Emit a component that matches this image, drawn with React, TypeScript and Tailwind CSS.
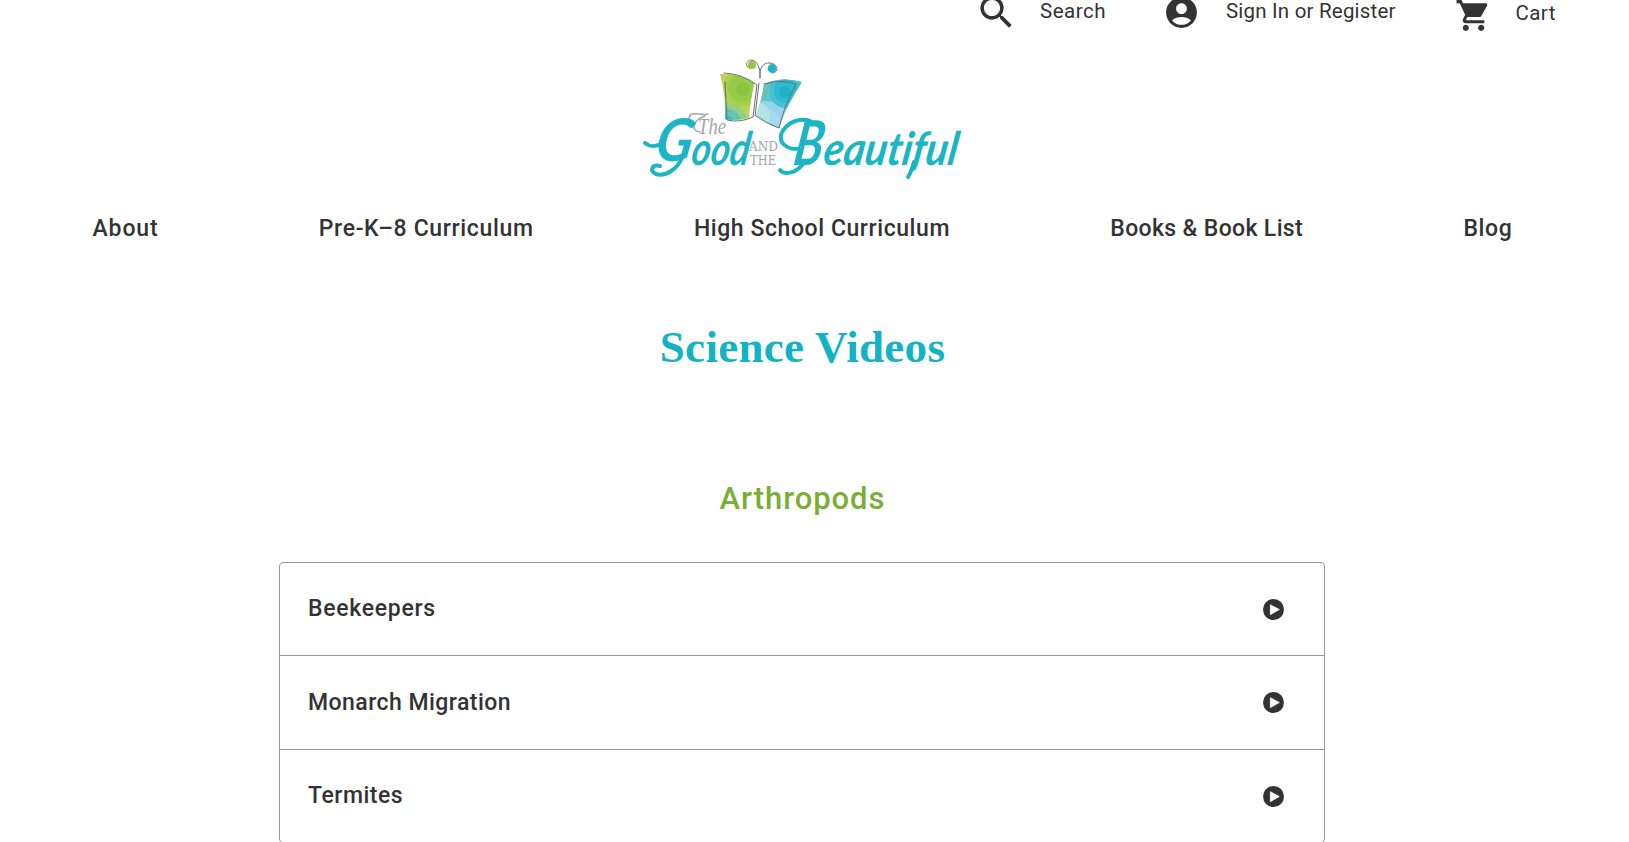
import React from "react";
import { MdSearch, MdAccountCircle, MdShoppingCart } from "react-icons/md";

const videos = [
  { name: "Beekeepers", tracking: "tracking-[0.7px]" },
  { name: "Monarch Migration", tracking: "tracking-[0.45px]" },
  { name: "Termites", tracking: "tracking-[0.5px]" },
];

function Logo() {
  return (
    <svg width="345" height="140" viewBox="0 0 345 140" className="block overflow-visible">
      <defs>
        <clipPath id="leftWing">
          <path d="M90 24 Q110 23 124 33 Q120 52 119 68 Q107 71 95 69 Q96 45 90 24Z" />
        </clipPath>
        <clipPath id="rightWing">
          <path d="M134 34 Q152 26 172 32 Q158 52 149 78 Q137 75 126 65 Q132 50 134 34Z" />
        </clipPath>
      </defs>

      {/* Left wing */}
      <g clipPath="url(#leftWing)">
        <rect x="85" y="18" width="45" height="55" fill="#b9d65a" />
        <circle cx="112" cy="38" r="19" fill="#a8d04e" />
        <circle cx="112" cy="38" r="14" fill="#97cb47" />
        <circle cx="113" cy="39" r="7" fill="#89c540" />
        <circle cx="94" cy="77" r="25" fill="#93cf8a" />
        <circle cx="94" cy="77" r="19" fill="#67c5ac" />
        <circle cx="94" cy="77" r="12" fill="#38bac1" />
      </g>
      {/* Right wing */}
      <g clipPath="url(#rightWing)">
        <rect x="120" y="20" width="60" height="65" fill="#63c8d9" />
        <circle cx="130" cy="40" r="18" fill="#62c5bd" />
        <circle cx="135" cy="80" r="29" fill="#94d3ea" />
        <circle cx="133" cy="79" r="21" fill="#a5daf0" />
        <circle cx="126" cy="66" r="14" fill="#b3e4e5" />
        <circle cx="156" cy="41" r="17" fill="#46c1d3" />
        <circle cx="156" cy="41" r="12" fill="#30bacd" />
        <circle cx="155" cy="42" r="6" fill="#1cb4c9" />
      </g>
      {/* Book outline and antennae */}
      <g fill="none" stroke="#6d7072" strokeWidth="1" strokeLinecap="round">
        <path d="M94 23 Q113 24 127 35 L123 67 Q110 73 97 70 L95 32" />
        <path d="M129 33 L125 66 M134 34 Q152 29 166 34 Q154 56 149 78 Q136 73 126 66" />
        <path d="M130 28 C131 18 127 10 121 10 C114 11 116 20 122 18" />
        <path d="M130 28 C129 18 133 12 140 13 C149 14 149 23 142 23" />
      </g>
      <circle cx="122" cy="15" r="4" fill="#93c83f" />
      <circle cx="142" cy="18.5" r="4.4" fill="#21b6c5" />

      {/* Flourishes */}
      <g fill="none" stroke="#1cb5c4" strokeWidth="4" strokeLinecap="round">
        <path d="M15 93 C20 97 27 97 33 93" />
        <path d="M52 108 C47 119 36 127 26 124 C19 121 22 114 30 116" />
        <path d="M172 98 C156 102 144 90 155 78 C161 71 171 68 180 71" />
        <path d="M173 114 C165 124 154 125 150 120" />
        <path d="M284 112 C282 118 281 123 278 127" />
      </g>
      <path d="M59 68 C60 60 70 66 78 64 M75 66 C63 70 60 81 70 82" fill="none" stroke="#a4a5a8" strokeWidth="1.5" strokeLinecap="round" />

      <text x="68" y="84" textLength="28" lengthAdjust="spacingAndGlyphs" fontSize="23" fill="#a4a5a8" className="font-['Liberation_Serif',serif] italic">
        The
      </text>
      <g fill="#1cb5c4" transform="translate(0 115) skewX(-9)" className="font-['Lato',sans-serif] font-bold italic [font-variant-ligatures:none]">
        <text x="23" y="-4" textLength="37" lengthAdjust="spacingAndGlyphs" fontSize="59">G</text>
        <text x="60" y="0" textLength="58" lengthAdjust="spacingAndGlyphs" fontSize="46">ood</text>
        <text x="162" y="0" textLength="29" lengthAdjust="spacingAndGlyphs" fontSize="62">B</text>
        <text x="192" y="0" textLength="134" lengthAdjust="spacingAndGlyphs" fontSize="46">eautiful</text>
      </g>
      <g fill="#a4a5a8" className="font-['DejaVu_Serif',serif] font-extralight">
        <text x="119" y="101" textLength="29" lengthAdjust="spacingAndGlyphs" fontSize="13">AND</text>
        <text x="120" y="115" textLength="26" lengthAdjust="spacingAndGlyphs" fontSize="13">THE</text>
      </g>
    </svg>
  );
}

function PlayIcon() {
  return (
    <svg width="21" height="21" viewBox="0 0 63 63">
      <circle cx="31.5" cy="31.5" r="31.5" fill="#333" />
      <path d="M22 17 L49 31.5 L22 47Z" fill="#fff" stroke="#fff" strokeWidth="2" strokeLinejoin="round" />
    </svg>
  );
}

function App() {
  return (
    <div className="h-[842px] w-full overflow-hidden bg-white font-['Roboto',sans-serif] text-[#333]">
      <div className="w-[1605px]">
        {/* Top links */}
        <div className="flex h-[50px] items-start pl-[975px] text-[20.5px] leading-6 whitespace-nowrap">
          <MdSearch className="-mt-[9px] size-[43px] shrink-0" />
          <a className="ml-[22px] -mt-px w-[67px] shrink-0 tracking-[0.5px]">Search</a>
          <MdAccountCircle className="ml-14 -mt-1.5 size-[37px] shrink-0" />
          <a className="ml-[26px] -mt-px w-[171px] shrink-0 tracking-[0.2px]">Sign In or Register</a>
          <MdShoppingCart className="ml-[57.5px] -mt-[3px] size-[37px] shrink-0" />
          <a className="ml-6 mt-px shrink-0 tracking-[0.4px]">Cart</a>
        </div>

        {/* Logo */}
        <div className="flex h-[140px] pl-[630px]">
          <Logo />
        </div>

        {/* Navigation */}
        <nav className="mt-[23px] flex justify-between pl-[92.5px] pr-[92.5px] text-[23px] leading-8 font-medium whitespace-nowrap">
          <a className="tracking-[0.85px]">About</a>
          <a className="tracking-[0.65px]">Pre-K–8 Curriculum</a>
          <a className="tracking-[0.57px]">High School Curriculum</a>
          <a className="tracking-[0.35px]">Books &amp; Book List</a>
          <a className="tracking-[0.65px]">Blog</a>
        </nav>

        <h1 className="mt-[76px] text-center font-['Liberation_Serif',serif] text-[45px] leading-[52px] font-bold tracking-[0.3px] text-[#13b3c4]">
          Science Videos
        </h1>
        <h2 className="mt-[108px] text-center text-[31px] leading-9 font-medium tracking-[0.95px] text-[#7bae37]">
          Arthropods
        </h2>

        {/* Video list */}
        <div className="mt-[45px] ml-[279px] w-[1046px] rounded border border-[#999]">
          {videos.map((video) => (
            <div
              key={video.name}
              className="flex h-[93.4px] items-center justify-between border-b border-[#999] pr-10 pl-[28px] last:h-[92.5px] last:border-b-0"
            >
              <span className={`text-[23px] leading-8 font-medium ${video.tracking}`}>{video.name}</span>
              <PlayIcon />
            </div>
          ))}
        </div>
      </div>
    </div>
  );
}

export default App;
